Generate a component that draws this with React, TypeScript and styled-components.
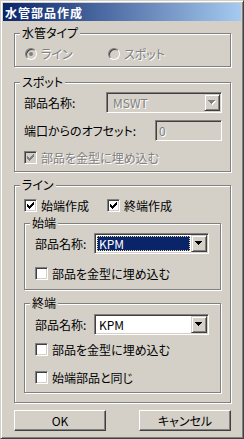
import React from "react";
import styled, { createGlobalStyle, css } from "styled-components";

const FACE = "#D4D0C8";
const SHADOW = "#808080";
const DARK = "#404040";
const HILITE = "#FFFFFF";
const NAVY = "#0A246A";

const GlobalStyle = createGlobalStyle`
  *, *::before, *::after { box-sizing: border-box; }
  html, body { margin: 0; padding: 0; background: ${FACE}; }
  body {
    font-family: "Noto Sans CJK JP", "Noto Sans", sans-serif;
    font-size: 12px;
    line-height: 13px;
    color: #000;
    font-feature-settings: "palt";
  }
`;

const sunken = css`
  border: 1px solid;
  border-color: ${SHADOW} ${HILITE} ${HILITE} ${SHADOW};
  box-shadow: inset 1px 1px ${DARK}, inset -1px -1px ${FACE};
`;

const raised = css`
  border: 1px solid;
  border-color: ${FACE} ${DARK} ${DARK} ${FACE};
  box-shadow: inset 1px 1px ${HILITE}, inset -1px -1px ${SHADOW};
`;

const disabledText = css`
  color: ${SHADOW};
  text-shadow: 1px 1px ${HILITE};
`;

const Window = styled.div`
  width: 244px;
  height: 439px;
  background: ${FACE};
  ${raised}
  padding: 2px;
  display: flex;
  flex-direction: column;
`;

const TitleBar = styled.div`
  height: 18px;
  flex: none;
  display: flex;
  align-items: center;
  padding-left: 2px;
  background: linear-gradient(to right, ${NAVY}, #a6caf0);
  color: #fff;
  font-weight: bold;
  letter-spacing: 1px;
`;

const Body = styled.div`
  display: flex;
  flex-direction: column;
  padding: 6px 10px 0 11px;
`;

const GroupBox = styled.fieldset<{ $mt?: number }>`
  margin: ${(p) => p.$mt ?? 0}px 0 0;
  padding: 0;
  border: 1px solid ${SHADOW};
  box-shadow: inset 1px 1px ${HILITE}, 1px 1px ${HILITE};
  min-inline-size: 0;
`;

const Legend = styled.legend`
  margin-left: 5px;
  padding: 0 2px;
  height: 12px;
  line-height: 12px;
  background: ${FACE};
`;

const GroupContent = styled.div<{ $pad: string }>`
  display: flex;
  flex-direction: column;
  padding: ${(p) => p.$pad};
`;

const Row = styled.div<{ $mt?: number; $ml?: number }>`
  display: flex;
  align-items: center;
  margin-top: ${(p) => p.$mt ?? 0}px;
  margin-left: ${(p) => p.$ml ?? 0}px;
`;

const Caption = styled.span<{ $disabled?: boolean }>`
  white-space: nowrap;
  ${(p) => p.$disabled && disabledText}
`;

const FieldLabel = styled.span<{ $width: number }>`
  width: ${(p) => p.$width}px;
  flex: none;
  white-space: nowrap;
`;

const Item = styled.label<{ $width?: number }>`
  display: flex;
  align-items: center;
  gap: 4px;
  flex: none;
  width: ${(p) => (p.$width ? `${p.$width}px` : "auto")};
`;

const CheckBoxBox = styled.span<{ $disabled?: boolean }>`
  width: 13px;
  height: 13px;
  flex: none;
  ${sunken}
  background: ${(p) => (p.$disabled ? FACE : "#fff")};
  display: flex;
  align-items: center;
  justify-content: center;
`;

const RadioCircle = styled.span<{ $disabled?: boolean }>`
  width: 12px;
  height: 12px;
  flex: none;
  border-radius: 50%;
  ${sunken}
  background: ${(p) => (p.$disabled ? FACE : "#fff")};
  display: flex;
  align-items: center;
  justify-content: center;
`;

const RadioDot = styled.span<{ $disabled?: boolean }>`
  width: 4px;
  height: 4px;
  border-radius: 50%;
  background: ${(p) => (p.$disabled ? SHADOW : "#000")};
`;

const ComboBox = styled.div<{ $width: number; $disabled?: boolean }>`
  width: ${(p) => p.$width}px;
  height: 21px;
  flex: none;
  ${sunken}
  padding: 1px;
  display: flex;
  background: ${(p) => (p.$disabled ? FACE : "#fff")};
`;

const ComboValue = styled.span<{ $selected?: boolean; $disabled?: boolean }>`
  flex: 1;
  margin: 1px 1px 1px 1px;
  padding-left: 1px;
  display: flex;
  align-items: center;
  border: 1px solid transparent;
  white-space: nowrap;
  ${(p) =>
    p.$selected &&
    css`
      background: ${NAVY};
      color: #fff;
      border: 1px dotted #f5db95;
    `}
  ${(p) =>
    p.$disabled &&
    css`
      padding-left: 3px;
      ${disabledText}
    `}
`;

const DropButton = styled.span`
  width: 16px;
  height: 17px;
  flex: none;
  background: ${FACE};
  ${raised}
  display: flex;
  align-items: center;
  justify-content: center;
`;

const TextInput = styled.div<{ $width: number }>`
  width: ${(p) => p.$width}px;
  height: 21px;
  flex: none;
  ${sunken}
  background: ${FACE};
  padding-left: 3px;
  display: flex;
  align-items: center;
  ${disabledText}
`;

const ButtonRow = styled.div`
  display: flex;
  gap: 33px;
  margin-top: 7px;
`;

const PushButton = styled.button`
  width: 93px;
  height: 21px;
  padding: 0;
  font: inherit;
  color: #000;
  background: ${FACE};
  border: 1px solid;
  border-color: ${HILITE} ${DARK} ${DARK} ${HILITE};
  box-shadow: inset -1px -1px ${SHADOW}, inset 1px 1px ${FACE};
`;

const CheckMark = ({ disabled }: { disabled?: boolean }) => (
  <svg width="7" height="7" viewBox="0 0 7 7" shapeRendering="crispEdges">
    <path
      fill={disabled ? SHADOW : "#000"}
      d="M0 2h1v3H0z M1 3h1v3H1z M2 4h1v3H2z M3 3h1v3H3z M4 2h1v3H4z M5 1h1v3H5z M6 0h1v3H6z"
    />
  </svg>
);

const ArrowDown = ({ disabled }: { disabled?: boolean }) => (
  <svg width="8" height="5" viewBox="0 0 8 5" shapeRendering="crispEdges">
    {disabled && (
      <path fill={HILITE} d="M1 1h7v1H1z M2 2h5v1H2z M3 3h3v1H3z M4 4h1v1H4z" />
    )}
    <path
      fill={disabled ? SHADOW : "#000"}
      d="M0 0h7v1H0z M1 1h5v1H1z M2 2h3v1H2z M3 3h1v1H3z"
    />
  </svg>
);

const CheckBox = ({
  checked,
  disabled,
  label,
  width,
}: {
  checked?: boolean;
  disabled?: boolean;
  label: string;
  width?: number;
}) => (
  <Item $width={width}>
    <CheckBoxBox $disabled={disabled}>{checked && <CheckMark disabled={disabled} />}</CheckBoxBox>
    <Caption $disabled={disabled}>{label}</Caption>
  </Item>
);

const Radio = ({
  checked,
  disabled,
  label,
  width,
}: {
  checked?: boolean;
  disabled?: boolean;
  label: string;
  width?: number;
}) => (
  <Item $width={width}>
    <RadioCircle $disabled={disabled}>{checked && <RadioDot $disabled={disabled} />}</RadioCircle>
    <Caption $disabled={disabled}>{label}</Caption>
  </Item>
);

const Combo = ({
  value,
  width,
  disabled,
  selected,
}: {
  value: string;
  width: number;
  disabled?: boolean;
  selected?: boolean;
}) => (
  <ComboBox $width={width} $disabled={disabled}>
    <ComboValue $selected={selected} $disabled={disabled}>
      {value}
    </ComboValue>
    <DropButton>
      <ArrowDown disabled={disabled} />
    </DropButton>
  </ComboBox>
);

export default function App() {
  return (
    <>
      <GlobalStyle />
      <Window>
        <TitleBar>水管部品作成</TitleBar>
        <Body>
          <GroupBox>
            <Legend>水管タイプ</Legend>
            <GroupContent $pad="8px 0 6px 10px">
              <Row>
                <Radio checked disabled label="ライン" width={83} />
                <Radio disabled label="スポット" />
              </Row>
            </GroupContent>
          </GroupBox>

          <GroupBox $mt={9}>
            <Legend>スポット</Legend>
            <GroupContent $pad="4px 0 7px 9px">
              <Row>
                <FieldLabel $width={82}>部品名称:</FieldLabel>
                <Combo value="MSWT" width={116} disabled />
              </Row>
              <Row $mt={7}>
                <FieldLabel $width={131}>端口からのオフセット:</FieldLabel>
                <TextInput $width={67}>0</TextInput>
              </Row>
              <Row $mt={10}>
                <CheckBox checked disabled label="部品を金型に埋め込む" />
              </Row>
            </GroupContent>
          </GroupBox>

          <GroupBox $mt={7}>
            <Legend>ライン</Legend>
            <GroupContent $pad="8px 9px 9px 9px">
              <Row>
                <CheckBox checked label="始端作成" width={83} />
                <CheckBox checked label="終端作成" />
              </Row>

              <GroupBox $mt={5}>
                <Legend>始端</Legend>
                <GroupContent $pad="4px 0 9px 10px">
                  <Row>
                    <FieldLabel $width={59}>部品名称:</FieldLabel>
                    <Combo value="KPM" width={115} selected />
                  </Row>
                  <Row $mt={13}>
                    <CheckBox label="部品を金型に埋め込む" />
                  </Row>
                </GroupContent>
              </GroupBox>

              <GroupBox $mt={7}>
                <Legend>終端</Legend>
                <GroupContent $pad="5px 0 8px 10px">
                  <Row>
                    <FieldLabel $width={59}>部品名称:</FieldLabel>
                    <Combo value="KPM" width={115} />
                  </Row>
                  <Row $mt={8}>
                    <CheckBox label="部品を金型に埋め込む" />
                  </Row>
                  <Row $mt={15}>
                    <CheckBox label="始端部品と同じ" />
                  </Row>
                </GroupContent>
              </GroupBox>
            </GroupContent>
          </GroupBox>

          <ButtonRow>
            <PushButton>OK</PushButton>
            <PushButton>キャンセル</PushButton>
          </ButtonRow>
        </Body>
      </Window>
    </>
  );
}
